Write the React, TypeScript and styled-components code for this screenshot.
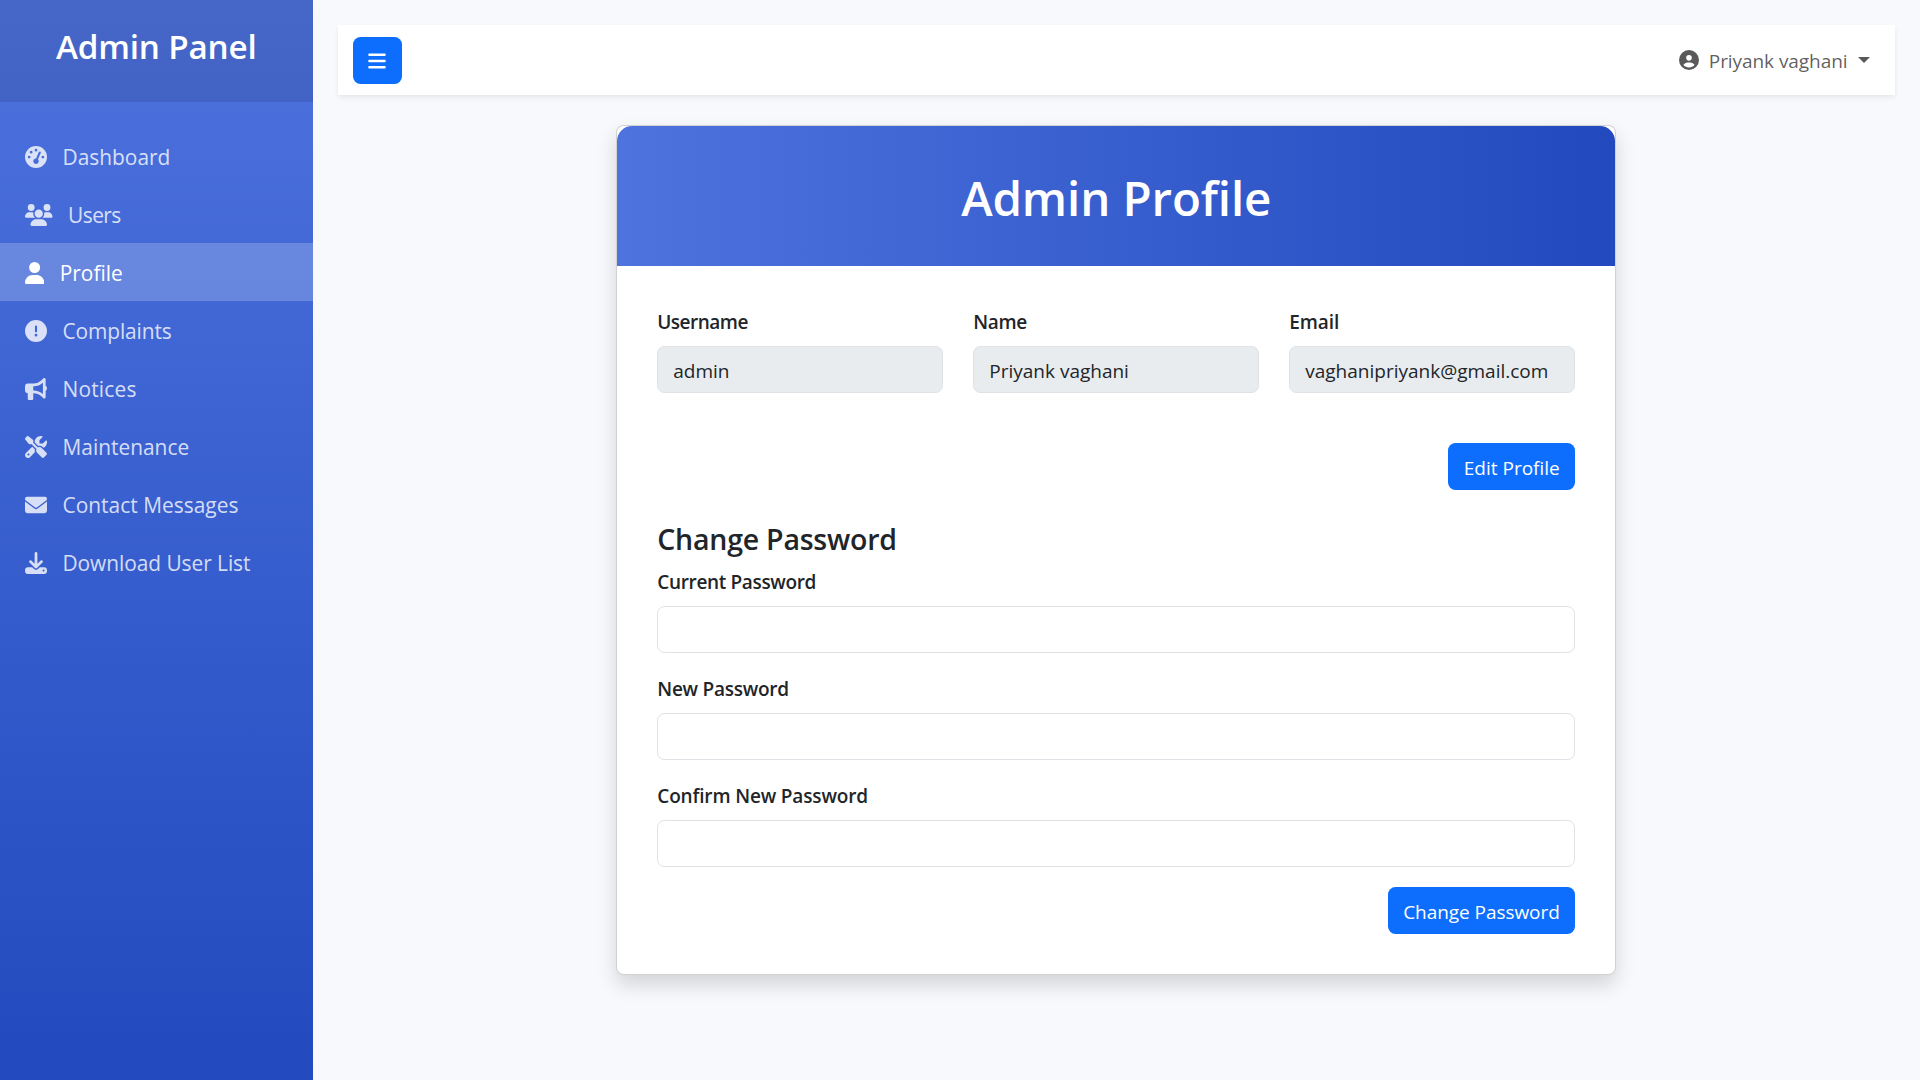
import React from "react";
import styled, { createGlobalStyle } from "styled-components";
import type { IconType } from "react-icons";
import {
  FaBars,
  FaBullhorn,
  FaCircleExclamation,
  FaCircleUser,
  FaDownload,
  FaEnvelope,
  FaGaugeHigh,
  FaScrewdriverWrench,
  FaUser,
  FaUsers,
} from "react-icons/fa6";

const GlobalStyle = createGlobalStyle`
  *, *::before, *::after { box-sizing: border-box; }
  body {
    margin: 0;
    background: #f8f9fc;
    color: #212529;
    font-family: "Open Sans", "Noto Sans", sans-serif;
    font-size: 19px;
    line-height: 30px;
  }
  h1, h3, h4, ul { margin: 0; padding: 0; }
  button, input { font: inherit; }
`;

const Shell = styled.div`
  display: flex;
  height: 1080px;
  overflow: hidden;
`;

const Sidebar = styled.nav`
  flex: none;
  width: 312.5px;
  background: linear-gradient(180deg, #4e73df 0%, #224abe 100%);
  color: #fff;
`;

const SidebarHeader = styled.div`
  height: 102px;
  padding-top: 25px;
  background: rgba(0, 0, 0, 0.1);
  text-align: center;
`;

const Brand = styled.h3`
  font-size: 33.25px;
  font-weight: 600;
  line-height: 42px;
  letter-spacing: -0.0058em;
`;

const Menu = styled.ul`
  padding-top: 25px;
  list-style: none;
`;

const MenuItem = styled.li<{ $active?: boolean }>`
  display: flex;
  align-items: center;
  gap: 15px;
  height: 58px;
  padding: 1px 25px 0;
  background: ${({ $active }) => ($active ? "rgba(255, 255, 255, 0.2)" : "transparent")};
  color: ${({ $active }) => ($active ? "#fff" : "rgba(255, 255, 255, 0.8)")};
  font-size: 20.9px;
  line-height: 33px;
`;

const MenuIcon = styled.span<{ $width?: number }>`
  display: flex;
  flex: none;
  width: ${({ $width = 22 }) => $width}px;

  svg {
    width: 100%;
    height: 22px;
  }
`;

const MenuText = styled.span<{ $spacing?: number }>`
  padding: 2px 0 0 0.5px;
  letter-spacing: ${({ $spacing = 0 }) => $spacing}em;
`;

const Main = styled.main`
  flex: 1;
  padding: 25px;
`;

const Topbar = styled.header`
  display: flex;
  align-items: center;
  justify-content: space-between;
  height: 70px;
  margin-bottom: 30px;
  padding: 0 25px 0 15px;
  background: #fff;
  box-shadow: 0 2.5px 5px rgba(0, 0, 0, 0.075);
`;

const Button = styled.button<{ $spacing?: number }>`
  display: flex;
  align-items: center;
  justify-content: center;
  height: 47px;
  padding: 3px 15.5px 0;
  border: 0;
  border-radius: 7.5px;
  background: #0d6efd;
  color: #fff;
  letter-spacing: ${({ $spacing = 0 }) => $spacing}em;
`;

const ToggleButton = styled(Button)`
  width: 49px;
  padding: 1px 0 0;

  svg {
    width: 20px;
    height: 20px;
  }
`;

const UserMenu = styled.div`
  display: flex;
  align-items: center;
  color: rgba(0, 0, 0, 0.65);

  svg {
    width: 20px;
    height: 20px;
  }
`;

const UserName = styled.span`
  margin-left: 10px;
  padding-top: 1px;
  letter-spacing: -0.0033em;
`;

const Caret = styled.span`
  margin: 0 0 1px 10.5px;
  border-top: 6px solid;
  border-right: 6px solid transparent;
  border-left: 6px solid transparent;
`;

const Card = styled.section`
  width: 1000px;
  margin: 0 auto;
  border: 1px solid rgba(0, 0, 0, 0.175);
  border-radius: 7.5px;
  background: #fff;
  box-shadow: 0 10px 20px rgba(0, 0, 0, 0.15);
`;

const CardHeader = styled.div`
  height: 140px;
  padding-top: 40px;
  border-radius: 15px 15px 0 0;
  background: linear-gradient(90deg, #4e73df 0%, #224abe 100%);
  color: #fff;
  text-align: center;
`;

const CardTitle = styled.h1`
  font-size: 47.5px;
  font-weight: 600;
  line-height: 63px;
  letter-spacing: -0.0025em;
`;

const CardBody = styled.div`
  padding: 40px;
`;

const Columns = styled.div`
  display: grid;
  grid-template-columns: repeat(3, 1fr);
  gap: 30px;
  margin-bottom: 30px;
`;

const Field = styled.div`
  margin-bottom: 20px;
`;

const Label = styled.label<{ $spacing?: number }>`
  display: block;
  margin-bottom: 10px;
  padding-top: 2px;
  font-weight: 600;
  line-height: 28px;
  letter-spacing: ${({ $spacing = 0 }) => $spacing}em;
`;

const Input = styled.input`
  display: block;
  width: 100%;
  height: 47px;
  padding: 3px 15px 0;
  border: 1px solid #dee2e6;
  border-radius: 7.5px;
  outline: 0;
  background: #fff;
  color: #212529;

  &:disabled {
    background: #e9ecef;
    opacity: 1;
  }
`;

const Actions = styled.div`
  display: flex;
  justify-content: flex-end;
`;

const SectionTitle = styled.h4`
  margin: 30px 0 10px;
  padding-top: 2px;
  font-size: 28.5px;
  font-weight: 600;
  line-height: 34px;
  letter-spacing: -0.0079em;
`;

type MenuEntry = {
  icon: IconType;
  text: string;
  active?: boolean;
  spacing?: number;
  iconWidth?: number;
};

const menu: MenuEntry[] = [
  { icon: FaGaugeHigh, text: "Dashboard" },
  { icon: FaUsers, text: "Users", spacing: -0.025, iconWidth: 27.5 },
  { icon: FaUser, text: "Profile", active: true, iconWidth: 19.25 },
  { icon: FaCircleExclamation, text: "Complaints", spacing: -0.005 },
  { icon: FaBullhorn, text: "Notices", spacing: 0.0099 },
  { icon: FaScrewdriverWrench, text: "Maintenance" },
  { icon: FaEnvelope, text: "Contact Messages", spacing: 0.0013 },
  { icon: FaDownload, text: "Download User List", spacing: -0.0025 },
];

const details = [
  { label: "Username", value: "admin", spacing: -0.027 },
  { label: "Name", value: "Priyank vaghani", spacing: -0.018 },
  { label: "Email", value: "vaghanipriyank@gmail.com", spacing: -0.0046 },
];

const passwords = [
  { label: "Current Password", spacing: -0.0182 },
  { label: "New Password", spacing: -0.0132 },
  { label: "Confirm New Password", spacing: -0.008 },
];

export default function App() {
  return (
    <>
      <GlobalStyle />
      <Shell>
        <Sidebar>
          <SidebarHeader>
            <Brand>Admin Panel</Brand>
          </SidebarHeader>
          <Menu>
            {menu.map(({ icon: Icon, text, active, spacing, iconWidth }) => (
              <MenuItem key={text} $active={active}>
                <MenuIcon $width={iconWidth}>
                  <Icon />
                </MenuIcon>
                <MenuText $spacing={spacing}>{text}</MenuText>
              </MenuItem>
            ))}
          </Menu>
        </Sidebar>
        <Main>
          <Topbar>
            <ToggleButton type="button" aria-label="Toggle sidebar">
              <FaBars />
            </ToggleButton>
            <UserMenu>
              <FaCircleUser />
              <UserName>Priyank vaghani</UserName>
              <Caret />
            </UserMenu>
          </Topbar>
          <Card>
            <CardHeader>
              <CardTitle>Admin Profile</CardTitle>
            </CardHeader>
            <CardBody>
              <Columns>
                {details.map(({ label, value, spacing }) => (
                  <Field key={label}>
                    <Label $spacing={spacing}>{label}</Label>
                    <Input value={value} disabled readOnly />
                  </Field>
                ))}
              </Columns>
              <Actions>
                <Button type="button">Edit Profile</Button>
              </Actions>
              <SectionTitle>Change Password</SectionTitle>
              {passwords.map(({ label, spacing }) => (
                <Field key={label}>
                  <Label $spacing={spacing}>{label}</Label>
                  <Input type="password" />
                </Field>
              ))}
              <Actions>
                <Button type="button" $spacing={-0.003}>
                  Change Password
                </Button>
              </Actions>
            </CardBody>
          </Card>
        </Main>
      </Shell>
    </>
  );
}
